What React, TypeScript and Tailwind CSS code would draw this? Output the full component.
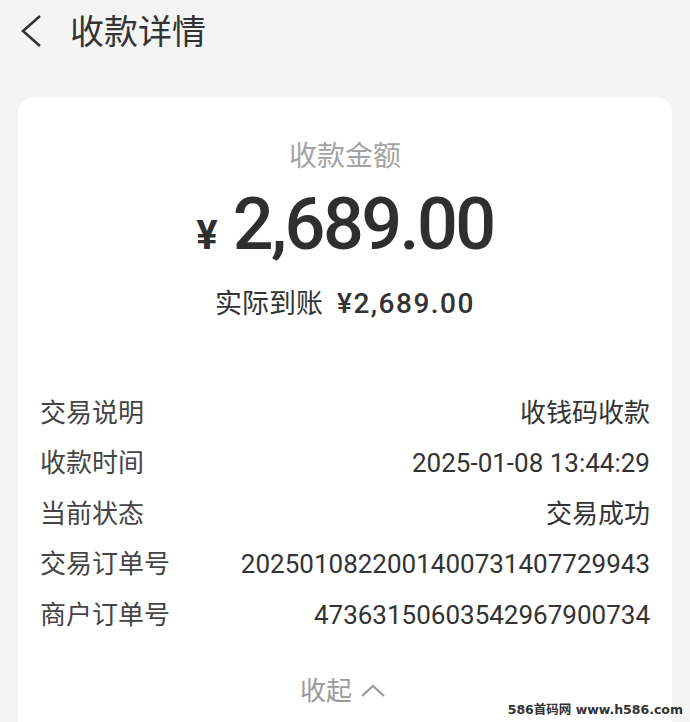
const rows: { label: string; value: string }[] = [
  { label: '交易说明', value: '收钱码收款' },
  { label: '收款时间', value: '2025-01-08 13:44:29' },
  { label: '当前状态', value: '交易成功' },
  { label: '交易订单号', value: '2025010822001400731407729943' },
  { label: '商户订单号', value: '47363150603542967900734' },
];

const cjk = "font-['Roboto','Noto_Sans_CJK_SC',sans-serif]";

export default function App() {
  return (
    <div className={`relative h-[722px] w-[690px] overflow-hidden bg-[#f4f4f4] ${cjk}`}>
      {/* Header */}
      <div className="flex h-[64px] items-center pl-[20px]">
        <svg width="24" height="36" viewBox="0 0 24 36" fill="none" className="mt-[-1px]">
          <path d="M20 2 L3 17 L20 32" stroke="#333" strokeWidth="2.6" strokeLinejoin="miter" />
        </svg>
        <h1 className="ml-[26px] text-[34px] leading-none text-[#333]">收款详情</h1>
      </div>

      {/* Card */}
      <div className="mx-[18px] mt-[33px] h-[700px] rounded-[16px] bg-white">
        <div className="flex flex-col items-center pt-[40px]">
          <p className="text-[28px] leading-[40px] text-[#a3a3a3]">收款金额</p>
          <div className="mt-[12px] flex items-baseline text-[#2f2f2f]">
            <span className="mr-[15px] font-['Roboto'] text-[40px] font-bold leading-none">¥</span>
            <span className="font-['Roboto'] text-[72px] font-medium leading-[72px] tracking-[-2.6px]">2,689.00</span>
          </div>
          <div className="mt-[22px] flex items-baseline text-[#333]">
            <span className="text-[27px] leading-[36px]">实际到账</span>
            <span className="ml-[14px] font-['Roboto'] text-[28px] font-medium tracking-[1.5px]">¥2,689.00</span>
          </div>
        </div>

        <div className="mt-[63px] flex flex-col px-[22px]">
          {rows.map((row) => (
            <div key={row.label} className="flex h-[50.5px] items-center justify-between">
              <span className="text-[26px] text-[#444]">{row.label}</span>
              <span className="text-[26px] text-[#333]">{row.value}</span>
            </div>
          ))}
        </div>

        <div className="mt-[37px] flex items-center justify-center gap-[8px] pr-[4px] text-[#9a9a9a]">
          <span className="text-[26px] leading-none">收起</span>
          <svg width="26" height="14" viewBox="0 0 26 14" fill="none">
            <path d="M2 12 L13 2 L24 12" stroke="#9a9a9a" strokeWidth="2.2" />
          </svg>
        </div>
      </div>

      {/* Watermark */}
      <div className="absolute bottom-[6px] right-[7px] font-['DejaVu_Sans','Noto_Sans_CJK_SC',sans-serif] text-[12.5px] font-bold leading-none text-[#333]">
        586首码网 www.h586.com
      </div>
    </div>
  );
}
